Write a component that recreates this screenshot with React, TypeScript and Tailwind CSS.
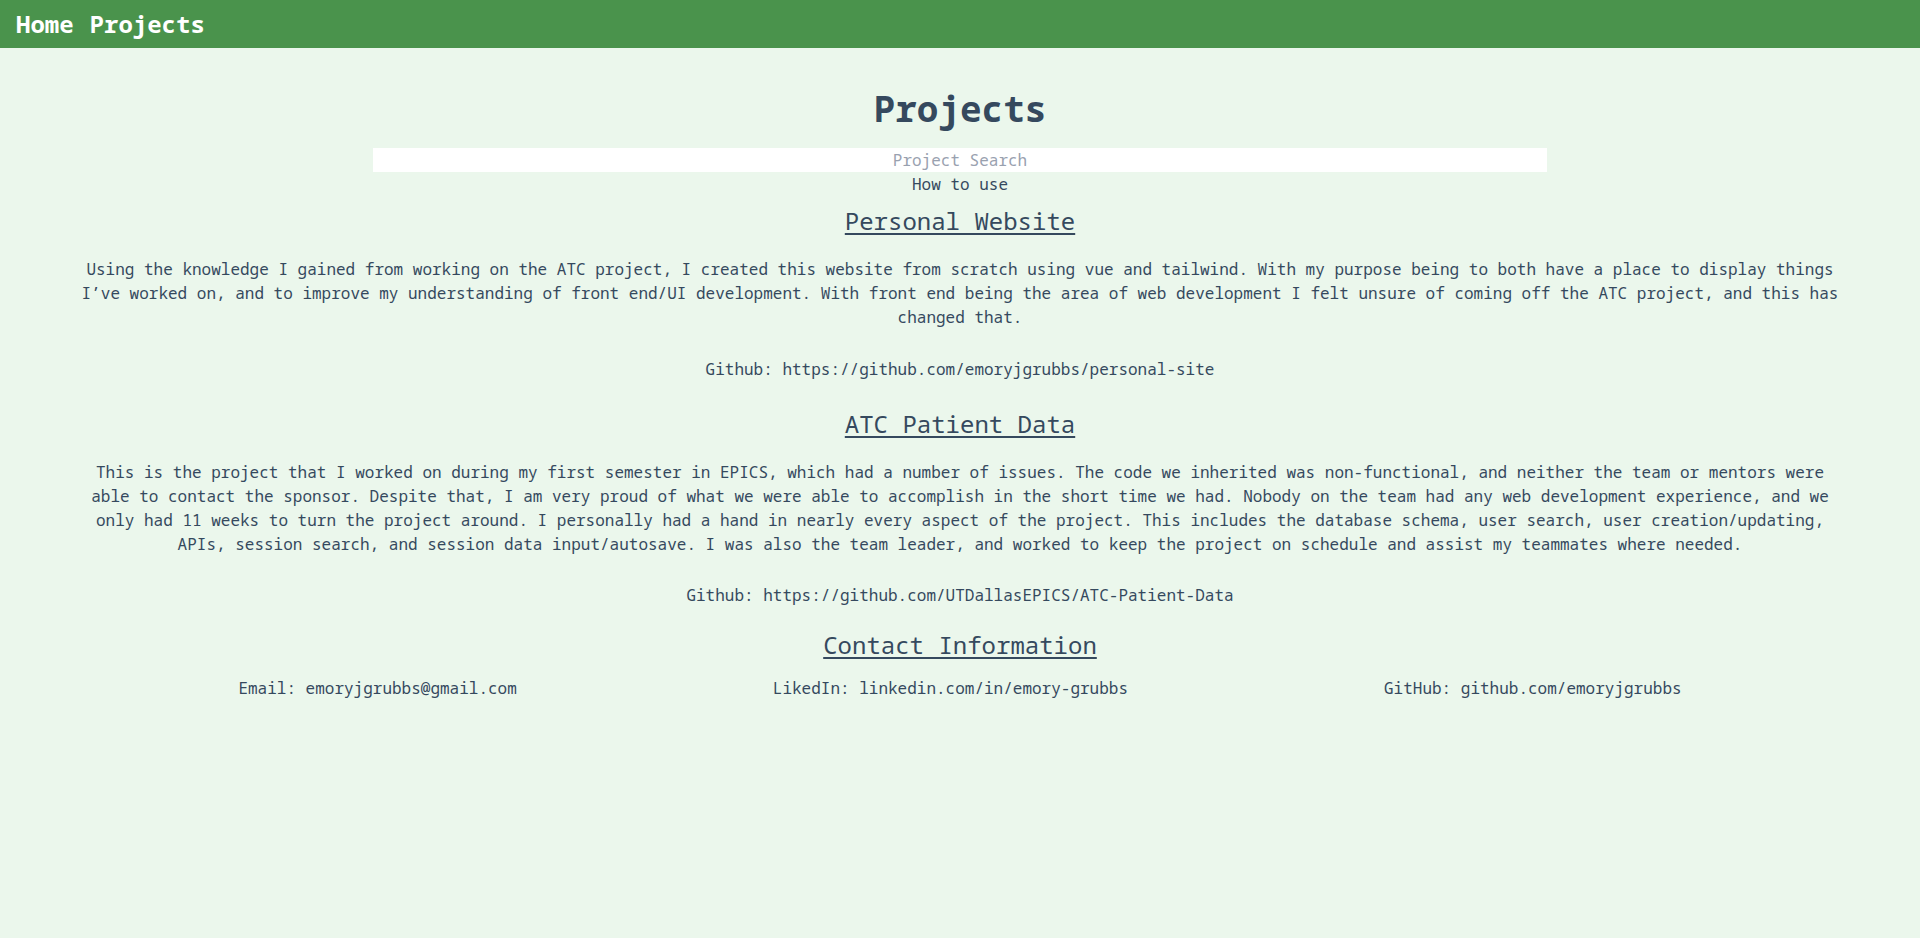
import { useState } from 'react';

const projects = [
  {
    title: 'Personal Website',
    body: 'Using the knowledge I gained from working on the ATC project, I created this website from scratch using vue and tailwind. With my purpose being to both have a place to display things I’ve worked on, and to improve my understanding of front end/UI development. With front end being the area of web development I felt unsure of coming off the ATC project, and this has changed that.',
    github: 'https://github.com/emoryjgrubbs/personal-site',
  },
  {
    title: 'ATC Patient Data',
    body: 'This is the project that I worked on during my first semester in EPICS, which had a number of issues. The code we inherited was non-functional, and neither the team or mentors were able to contact the sponsor. Despite that, I am very proud of what we were able to accomplish in the short time we had. Nobody on the team had any web development experience, and we only had 11 weeks to turn the project around. I personally had a hand in nearly every aspect of the project. This includes the database schema, user search, user creation/updating, APIs, session search, and session data input/autosave. I was also the team leader, and worked to keep the project on schedule and assist my teammates where needed.',
    github: 'https://github.com/UTDallasEPICS/ATC-Patient-Data',
  },
];

export default function App() {
  const [search, setSearch] = useState('');

  const shown = projects.filter((p) => p.title.toLowerCase().includes(search.toLowerCase()));

  return (
    <div className="min-h-screen bg-[#ebf7ec] font-['Noto_Sans_Mono','DejaVu_Sans_Mono',monospace] text-[#35495e]">
      {/* nav */}
      <nav className="flex h-12 items-center gap-4 bg-[#4a934c] px-4 text-2xl font-bold text-white">
        <a href="#">Home</a>
        <a href="#">Projects</a>
      </nav>

      <main className="pt-[41px] text-center">
        <h1 className="mb-[19px] text-4xl font-bold">Projects</h1>
        <input
          className="mx-auto block h-6 w-[1174px] bg-white text-center text-base outline-none placeholder:text-gray-400"
          placeholder="Project Search"
          value={search}
          onChange={(e) => setSearch(e.target.value)}
        />
        <div>How to use</div>

        {shown.map((p, i) => (
          <section key={p.title} className={i === 0 ? 'mt-[9px]' : 'mt-[27px]'}>
            <h2 className="text-2xl underline underline-offset-[3px]">{p.title}</h2>
            <p className="mt-5 px-20">{p.body}</p>
            <p className={i === 0 ? 'mt-7' : 'mt-[27px]'}>Github: {p.github}</p>
          </section>
        ))}

        <h2 className="mt-[22px] text-2xl underline underline-offset-[3px]">Contact Information</h2>
        <div className="mt-[15px] flex justify-center gap-64">
          <span>Email: emoryjgrubbs@gmail.com</span>
          <span>LikedIn: linkedin.com/in/emory-grubbs</span>
          <span>GitHub: github.com/emoryjgrubbs</span>
        </div>
      </main>
    </div>
  );
}
